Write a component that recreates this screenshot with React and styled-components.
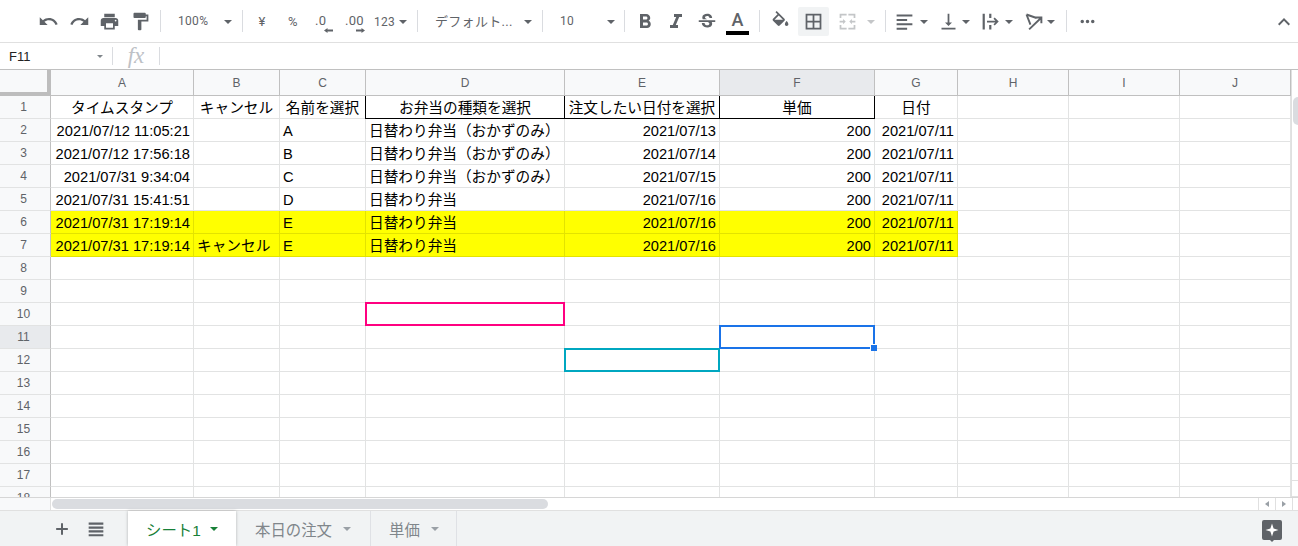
import React from 'react';
import styled, { createGlobalStyle } from 'styled-components';

const UI = '"Roboto", "Noto Sans CJK JP", sans-serif';
const CELL = '"Liberation Sans", "Noto Sans CJK JP", sans-serif';

const Global = createGlobalStyle`
  html, body { margin: 0; padding: 0; background: #fff; overflow: hidden; }
  * { box-sizing: border-box; }
`;

const Page = styled.div`
  width: 1298px;
  height: 546px;
  display: flex;
  flex-direction: column;
  overflow: hidden;
  font-family: ${UI};
`;

/* ---------- toolbar ---------- */
const Toolbar = styled.div`
  height: 43px;
  flex: none;
  display: flex;
  align-items: center;
  padding: 1px 0 0 33px;
  border-bottom: 1px solid #e0e0e0;
  color: #5f6368;
`;

const Tool = styled.div`
  width: ${(p) => p.$w}px;
  height: 29px;
  flex: none;
  display: flex;
  align-items: center;
  justify-content: ${(p) => (p.$pl !== undefined ? 'flex-start' : 'center')};
  padding-left: ${(p) => p.$pl || 0}px;
  gap: ${(p) => p.$gap || 0}px;
  border-radius: 2px;
  background: ${(p) => (p.$active ? '#f1f3f4' : 'transparent')};
  color: ${(p) => (p.$off ? '#c4c6c8' : '#5f6368')};
`;

const Sep = styled.div`
  width: 1px;
  height: 22px;
  flex: none;
  background: #dadce0;
  margin-top: -1px;
  margin-left: ${(p) => p.$ml || 0}px;
  margin-right: ${(p) => p.$mr || 0}px;
`;

const ToolText = styled.span`
  font-size: ${(p) => p.$size || 12}px;
  letter-spacing: 0.3px;
  color: #5f6368;
  white-space: nowrap;
  width: ${(p) => (p.$w ? `${p.$w}px` : 'auto')};
  margin-bottom: ${(p) => p.$up || 0}px;
  flex: none;
`;

const Caret = styled.span`
  width: 0;
  height: 0;
  flex: none;
  border-left: ${(p) => p.$s || 4.5}px solid transparent;
  border-right: ${(p) => p.$s || 4.5}px solid transparent;
  border-top: ${(p) => p.$s || 4.5}px solid ${(p) => p.$color || '#5f6368'};
`;

const Decimal = styled.span`
  position: relative;
  font-size: 13px;
  line-height: 15px;
  letter-spacing: 0.3px;
  color: #5f6368;
  margin-bottom: 3px;
`;

const DecimalArrow = styled.svg`
  position: absolute;
  top: 15px;
  left: ${(p) => p.$left}px;
`;

const Collapse = styled.div`
  margin-left: auto;
  width: 28px;
  display: flex;
  justify-content: center;
  color: #5f6368;
`;

const IconSvg = styled.svg`
  flex: none;
  display: block;
`;

const Icon = ({ d, size = 21, children }) => (
  <IconSvg width={size} height={size} viewBox="0 0 24 24" fill="currentColor">
    {d && <path d={d} />}
    {children}
  </IconSvg>
);

const P = {
  undo: 'M12.5 8c-2.65 0-5.05.99-6.9 2.6L2 7v9h9l-3.62-3.62c1.39-1.16 3.16-1.88 5.12-1.88 3.54 0 6.55 2.31 7.6 5.5l2.37-.78C21.08 11.03 17.15 8 12.5 8z',
  redo: 'M18.4 10.6C16.55 8.99 14.15 8 11.5 8c-4.65 0-8.58 3.03-9.96 7.22L3.9 16c1.05-3.19 4.05-5.5 7.6-5.5 1.95 0 3.73.72 5.12 1.88L13 16h9V7l-3.6 3.6z',
  print: 'M19 8H5c-1.66 0-3 1.34-3 3v6h4v4h12v-4h4v-6c0-1.66-1.34-3-3-3zm-3 11H8v-5h8v5zm3-7c-.55 0-1-.45-1-1s.45-1 1-1 1 .45 1 1-.45 1-1 1zm-1-9H6v4h12V3z',
  paint: 'M18 4V3c0-.55-.45-1-1-1H5c-.55 0-1 .45-1 1v4c0 .55.45 1 1 1h12c.55 0 1-.45 1-1V6h1v4H9v11c0 .55.45 1 1 1h2c.55 0 1-.45 1-1v-9h8V4h-3z',
  bold: 'M15.6 10.79c.97-.67 1.65-1.77 1.65-2.79 0-2.26-1.75-4-4-4H7v14h7.04c2.09 0 3.71-1.7 3.71-3.79 0-1.52-.86-2.82-2.15-3.42zM10 6.5h3c.83 0 1.5.67 1.5 1.5s-.67 1.5-1.5 1.5h-3v-3zm3.5 9H10v-3h3.5c.83 0 1.5.67 1.5 1.5s-.67 1.5-1.5 1.5z',
  italic: 'M10 4v3h2.21l-3.42 8H6v3h8v-3h-2.21l3.42-8H18V4z',
  strike: 'M6.85 7.08C6.85 4.37 9.45 3 12.24 3c1.64 0 3 .49 3.9 1.28.77.65 1.46 1.73 1.46 3.24h-3.01c0-.31-.05-.59-.15-.85-.29-.86-1.2-1.28-2.25-1.28-1.86 0-2.34 1.02-2.34 1.7 0 .48.25.88.74 1.21.38.25.77.48 1.41.7H7.39c-.21-.34-.54-.89-.54-1.92zM21 12v-2H3v2h9.62c1.15.45 1.96.75 1.96 1.97 0 1-.81 1.67-2.28 1.67-1.54 0-2.93-.54-2.93-2.51H6.4c0 .55.08 1.13.24 1.58.81 2.29 3.29 3.3 5.67 3.3 2.27 0 5.3-.89 5.3-4.05 0-.3-.01-1.16-.48-1.96H21V12z',
  fill: 'M16.56 8.94L7.62 0 6.21 1.41l2.38 2.38-5.15 5.15c-.59.59-.59 1.54 0 2.12l5.5 5.5c.29.29.68.44 1.06.44s.77-.15 1.06-.44l5.5-5.5c.59-.58.59-1.53 0-2.12zM5.21 10L10 5.21 14.79 10H5.21zM19 11.5s-2 2.17-2 3.5c0 1.1.9 2 2 2s2-.9 2-2c0-1.33-2-3.5-2-3.5z',
  borders: 'M3 3v18h18V3H3zm8 16H5v-6h6v6zm0-8H5V5h6v6zm8 8h-6v-6h6v6zm0-8h-6V5h6v6z',
  merge: 'M3 3h8v2H5v3H3V3zm10 0h8v5h-2V5h-6V3zM3 16h2v3h6v2H3v-5zm16 0h2v5h-8v-2h6v-3zM3 11h4V9l3 3-3 3v-2H3v-2zm18 0v2h-4v2l-3-3 3-3v2h4z',
  align: 'M3 4h18v2.400H3V4zm0 5h12v2.400H3V9zm0 5h18v2.400H3V14zm0 5h12v2.400H3V19z',
  valign: 'M16 13h-3V3h-2v10H8l4 4 4-4zM4 19v2h16v-2H4z',
  wrap: 'M3 3h2.500v18H3V3zm7.500 0H13v5h-2.500V3zm0 13H13v5h-2.500v-5zM8 11h9.600l-2.200-2.200L16.800 7.400 21.400 12l-4.600 4.600-1.400-1.400 2.200-2.200H8v-2z',
  more: 'M6 10a2 2 0 1 0 0 4 2 2 0 0 0 0-4zm6 0a2 2 0 1 0 0 4 2 2 0 0 0 0-4zm6 0a2 2 0 1 0 0 4 2 2 0 0 0 0-4z',
  up: 'M7.41 15.41L12 10.83l4.59 4.58L18 14l-6-6-6 6z',
};

const TextColor = styled.div`
  display: flex;
  flex-direction: column;
  align-items: center;
  width: 23px;
  margin-top: 2px;
`;

const Letter = styled.span`
  font-family: ${UI};
  font-weight: 500;
  font-size: 18px;
  line-height: 18px;
  color: #5f6368;
`;

const Swatch = styled.div`
  width: 23px;
  height: 4px;
  background: #000;
  margin-top: 2px;
`;

const Toolbar2 = () => (
  <Toolbar>
    <Tool $w={31}><Icon d={P.undo} /></Tool>
    <Tool $w={30}><Icon d={P.redo} /></Tool>
    <Tool $w={31}><Icon d={P.print} /></Tool>
    <Tool $w={30}><Icon d={P.paint} /></Tool>
    <Sep $ml={5} />
    <Tool $w={80} $pl={17}><ToolText $w={46} $up={2}>100%</ToolText><Caret /></Tool>
    <Sep $ml={1} />
    <Tool $w={38}><ToolText $size={13} $up={1}>¥</ToolText></Tool>
    <Tool $w={24}><ToolText $size={13} $up={1}>%</ToolText></Tool>
    <Tool $w={34} $pl={10}>
      <Decimal>.0
        <DecimalArrow $left={9} width="9" height="5" viewBox="0 0 9 5" fill="currentColor">
          <path d="M0 2.500L3.500 0v1.500H9v2H3.500V5z" />
        </DecimalArrow>
      </Decimal>
    </Tool>
    <Tool $w={28} $pl={6}>
      <Decimal>.00
        <DecimalArrow $left={11} width="9" height="5" viewBox="0 0 9 5" fill="currentColor">
          <path d="M9 2.500L5.500 0v1.500H0v2h5.500V5z" />
        </DecimalArrow>
      </Decimal>
    </Tool>
    <Tool $w={45} $pl={7}><ToolText $w={25}>123</ToolText><Caret /></Tool>
    <Sep $ml={5} />
    <Tool $w={119} $pl={17}><ToolText $w={89} $size={13} $up={2}>デフォルト...</ToolText><Caret /></Tool>
    <Sep $ml={5} />
    <Tool $w={77} $pl={17}><ToolText $w={47} $up={2}>10</ToolText><Caret /></Tool>
    <Sep $ml={4} $mr={4} />
    <Tool $w={31}><Icon d={P.bold} size={24} /></Tool>
    <Tool $w={31}><Icon d={P.italic} size={24} /></Tool>
    <Tool $w={31}><Icon d={P.strike} size={22} /></Tool>
    <Tool $w={31}><TextColor><Letter>A</Letter><Swatch /></TextColor></Tool>
    <Sep $ml={6} $mr={3} />
    <Tool $w={35}><Icon d={P.fill} /></Tool>
    <Tool $w={31} $active><Icon d={P.borders} /></Tool>
    <Tool $w={36} $off><Icon d={P.merge} /></Tool>
    <Tool $w={11} $off><Caret $color="#c4c6c8" /></Tool>
    <Sep $ml={9} />
    <Tool $w={46} $pl={8} $gap={5}><Icon d={P.align} /><Caret /></Tool>
    <Tool $w={43} $pl={6} $gap={3}><Icon d={P.valign} /><Caret /></Tool>
    <Tool $w={44} $pl={5} $gap={4}><Icon d={P.wrap} /><Caret /></Tool>
    <Tool $w={43} $pl={4} $gap={3}>
      <Icon>
        <path d="M4 4l11.500 4M4 4l4.500 11.500M7 21L20.500 8M14.500 7.500h6.500V14" fill="none" stroke="currentColor" strokeWidth="2.200" />
      </Icon>
      <Caret />
    </Tool>
    <Sep $ml={4} />
    <Tool $w={40}><Icon d={P.more} /></Tool>
    <Collapse><Icon d={P.up} size={24} /></Collapse>
  </Toolbar>
);

/* ---------- formula bar ---------- */
const FormulaBar = styled.div`
  height: 27px;
  flex: none;
  display: flex;
  align-items: center;
  border-bottom: 1px solid #c0c0c0;
`;

const NameBox = styled.div`
  width: 113px;
  height: 18px;
  display: flex;
  align-items: center;
  justify-content: space-between;
  padding: 0 9px 0 9px;
  font-family: ${CELL};
  font-size: 13px;
  color: #222;
  border-right: 1px solid #dadce0;
`;

const Fx = styled.div`
  width: 47px;
  height: 18px;
  display: flex;
  align-items: center;
  justify-content: center;
  font-family: "Liberation Serif", serif;
  font-style: italic;
  font-size: 23px;
  color: #bdc1c6;
  border-right: 1px solid #dadce0;
`;

/* ---------- grid ---------- */
const Body = styled.div`
  height: 427px;
  flex: none;
  display: flex;
  overflow: hidden;
`;

const Sheet = styled.div`
  width: 1291px;
  flex: none;
  display: grid;
  grid-template-columns: 51px 143px 86px 86px 199px 155px 155px 83px 111px 111px 111px;
  grid-template-rows: 26px;
  grid-auto-rows: 23px;
  align-content: start;
`;

const Corner = styled.div`
  background: #f8f9fa;
  border-right: 4px solid #bdbdbd;
  border-bottom: 4px solid #bdbdbd;
`;

const ColHead = styled.div`
  display: flex;
  align-items: center;
  justify-content: center;
  font-family: ${CELL};
  font-size: 12px;
  color: #5f6368;
  background: ${(p) => (p.$on ? '#e8eaed' : '#f8f9fa')};
  border-right: 1px solid #c0c0c0;
  border-bottom: 1px solid #c0c0c0;
  padding-top: 1px;
`;

const RowHead = styled.div`
  display: flex;
  align-items: center;
  justify-content: center;
  font-family: ${CELL};
  font-size: 12px;
  color: #5f6368;
  background: ${(p) => (p.$on ? '#e8eaed' : '#f8f9fa')};
  border-right: 1px solid #c0c0c0;
  border-bottom: 1px solid #e2e3e3;
  padding-right: 3px;
`;

const Cell = styled.div`
  position: relative;
  display: flex;
  align-items: flex-end;
  justify-content: ${(p) => (p.$align === 'r' ? 'flex-end' : p.$align === 'c' ? 'center' : 'flex-start')};
  padding: 0 3px 0 3px;
  font-family: ${CELL};
  font-size: 14.67px;
  line-height: 20px;
  color: #000;
  white-space: nowrap;
  background: ${(p) => (p.$hl ? '#ffff00' : '#fff')};
  border-right: 1px solid ${(p) => (p.$hl ? '#e3e300' : p.$boxed ? '#000' : '#e2e3e3')};
  border-bottom: 1px solid ${(p) => (p.$hl ? '#e3e300' : p.$boxed ? '#000' : '#e2e3e3')};
  box-shadow: ${(p) => (p.$boxLeft ? '-1px 0 0 #000' : 'none')};
`;

const Outline = styled.div`
  position: absolute;
  top: -1px;
  left: -1px;
  right: -1px;
  bottom: -1px;
  border: 2px solid ${(p) => p.$color};
  pointer-events: none;
  z-index: 2;
`;

const Handle = styled.div`
  position: absolute;
  right: -3px;
  bottom: -3px;
  width: 7px;
  height: 7px;
  background: #1a73e8;
  border: 1px solid #fff;
  border-right: 0;
  border-bottom: 0;
  z-index: 3;
`;

const COLS = ['A', 'B', 'C', 'D', 'E', 'F', 'G', 'H', 'I', 'J'];
const HEAD = ['タイムスタンプ', 'キャンセル', '名前を選択', 'お弁当の種類を選択', '注文したい日付を選択', '単価', '日付'];
const ROWS = [
  ['2021/07/12 11:05:21', '', 'A', '日替わり弁当（おかずのみ）', '2021/07/13', '200', '2021/07/11'],
  ['2021/07/12 17:56:18', '', 'B', '日替わり弁当（おかずのみ）', '2021/07/14', '200', '2021/07/11'],
  ['2021/07/31 9:34:04', '', 'C', '日替わり弁当（おかずのみ）', '2021/07/15', '200', '2021/07/11'],
  ['2021/07/31 15:41:51', '', 'D', '日替わり弁当', '2021/07/16', '200', '2021/07/11'],
  ['2021/07/31 17:19:14', '', 'E', '日替わり弁当', '2021/07/16', '200', '2021/07/11', true],
  ['2021/07/31 17:19:14', 'キャンセル', 'E', '日替わり弁当', '2021/07/16', '200', '2021/07/11', true],
];
const ALIGN = ['r', 'l', 'l', 'l', 'r', 'r', 'r'];

const MARKS = {
  '10-3': '#ff0080',
  '12-4': '#00a7c0',
  '11-5': '#1a73e8',
};

const rowNums = Array.from({ length: 18 }, (_, i) => i + 1);

const SheetGrid = () => (
  <Sheet>
    <Corner />
    {COLS.map((c) => (
      <ColHead key={c} $on={c === 'F'}>{c}</ColHead>
    ))}
    {rowNums.map((n) => {
      const data = n > 1 ? ROWS[n - 2] : null;
      return (
        <React.Fragment key={n}>
          <RowHead $on={n === 11}>{n}</RowHead>
          {COLS.map((c, i) => {
            const mark = MARKS[`${n}-${i}`];
            let text = '';
            let align = ALIGN[i];
            if (n === 1) {
              text = HEAD[i] || '';
              align = 'c';
            } else if (data && i < 7) {
              text = data[i];
            }
            return (
              <Cell
                key={c}
                $align={align}
                $hl={data && data[7] && i < 7}
                $boxed={n === 1 && i >= 3 && i <= 5}
                $boxLeft={n === 1 && i === 3}
              >
                {text}
                {mark && <Outline $color={mark} />}
                {n === 11 && i === 5 && <Handle />}
              </Cell>
            );
          })}
        </React.Fragment>
      );
    })}
  </Sheet>
);

const VBar = styled.div`
  flex: 1;
  display: flex;
  flex-direction: column;
  background: #fff;
  border-left: 1px solid #e0e0e0;
`;

const VThumb = styled.div`
  width: 12px;
  height: 28px;
  margin: 27px 0 0 1px;
  background: #dadce0;
  border-radius: 5px;
`;

const VButtons = styled.div`
  margin-top: auto;
  height: 34px;
  border-top: 1px solid #e0e0e0;
  display: flex;
  flex-direction: column;
`;

const VBtn = styled.div`
  flex: 1;
  border-bottom: 1px solid #e0e0e0;
`;

/* ---------- horizontal scrollbar ---------- */
const HBar = styled.div`
  height: 13px;
  flex: none;
  display: flex;
  align-items: center;
  border-top: 1px solid #d6d6d6;
  background: #fff;
`;

const HSpacer = styled.div`
  width: 51px;
  height: 100%;
  flex: none;
  background: #f8f9fa;
  border-right: 1px solid #e0e0e0;
`;

const HThumb = styled.div`
  width: 496px;
  height: 10px;
  flex: none;
  margin-left: 1px;
  background: #dadce0;
  border-radius: 5px;
`;

const HBtn = styled.div`
  width: 17px;
  height: 100%;
  flex: none;
  display: flex;
  align-items: center;
  justify-content: center;
  border-left: 1px solid #e0e0e0;
  margin-left: ${(p) => p.$ml || 0}px;
`;

const HArrow = styled.span`
  width: 0;
  height: 0;
  border-top: 3.5px solid transparent;
  border-bottom: 3.5px solid transparent;
  ${(p) => (p.$dir === 'l' ? 'border-right: 4px solid #9aa0a6;' : 'border-left: 4px solid #9aa0a6;')}
`;

/* ---------- tabs ---------- */
const TabBar = styled.div`
  height: 36px;
  flex: none;
  display: flex;
  align-items: stretch;
  background: #f1f3f4;
  border-top: 1px solid #e0e0e0;
  color: #5f6368;
`;

const TabTools = styled.div`
  width: 128px;
  flex: none;
  display: flex;
  align-items: center;
  padding-left: 52px;
  gap: 13px;
`;

const Tab = styled.div`
  width: ${(p) => p.$w}px;
  flex: none;
  display: flex;
  align-items: center;
  padding-left: ${(p) => p.$pl}px;
  gap: ${(p) => p.$gap}px;
  font-family: ${CELL};
  font-size: 15.4px;
  color: ${(p) => (p.$on ? '#188038' : '#80868b')};
  background: ${(p) => (p.$on ? '#fff' : 'transparent')};
  box-shadow: ${(p) => (p.$on ? '0 0 3px rgba(60,64,67,.35)' : 'none')};
  border-right: ${(p) => (p.$on ? '0' : '1px solid #dfe1e5')};
`;

const Explore = styled.div`
  margin-left: auto;
  margin-right: 15px;
  margin-top: 5px;
  align-self: center;
  color: #5f6368;
`;

const Tabs = () => (
  <TabBar>
    <TabTools>
      <Icon size={20} d="M19 13.200h-5.800V19h-2.400v-5.800H5v-2.400h5.800V5h2.400v5.800H19z" />
      <Icon size={22} d="M4 5h16v2.400H4V5zm0 4.200h16v2.400H4V9.200zm0 4.200h16v2.400H4v-2.400zm0 4.200h16V20H4v-2.400z" />
    </TabTools>
    <Tab $on $w={108} $pl={18} $gap={9}>シート1<Caret $color="#188038" /></Tab>
    <Tab $w={135} $pl={19} $gap={11}>本日の注文<Caret $color="#9aa0a6" /></Tab>
    <Tab $w={86} $pl={18} $gap={11}>単価<Caret $color="#9aa0a6" /></Tab>
    <Explore>
      <IconSvg width="22" height="24" viewBox="0 0 22 24">
        <path d="M3 1h16a2 2 0 0 1 2 2v16a2 2 0 0 1-2 2h-6l-2 2-2-2H3a2 2 0 0 1-2-2V3a2 2 0 0 1 2-2z" fill="#5f6368" />
        <path d="M11 4.500l1.600 4.900 4.900 1.600-4.900 1.600L11 17.500l-1.600-4.900-4.900-1.600 4.900-1.600z" fill="#fff" />
      </IconSvg>
    </Explore>
  </TabBar>
);

export default function App() {
  return (
    <Page>
      <Global />
      <Toolbar2 />
      <FormulaBar>
        <NameBox>F11<Caret $s={3} $color="#80868b" /></NameBox>
        <Fx>fx</Fx>
      </FormulaBar>
      <Body>
        <SheetGrid />
        <VBar>
          <VThumb />
          <VButtons>
            <VBtn />
            <VBtn />
          </VButtons>
        </VBar>
      </Body>
      <HBar>
        <HSpacer />
        <HThumb />
        <HBtn $ml={710}><HArrow $dir="l" /></HBtn>
        <HBtn><HArrow $dir="r" /></HBtn>
        <HBtn />
      </HBar>
      <Tabs />
    </Page>
  );
}
